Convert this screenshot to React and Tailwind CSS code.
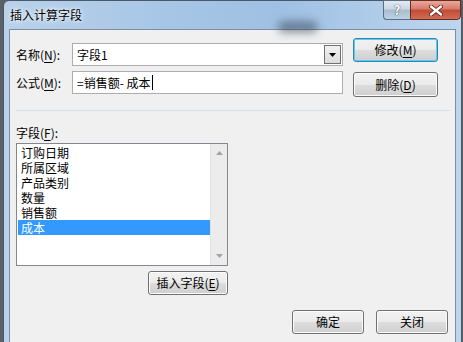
import React from 'react'

const FIELDS = ['订购日期', '所属区域', '产品类别', '数量', '销售额', '成本']

function Btn({ children, primary, className = '' }) {
  return (
    <div
      className={`flex items-center justify-center rounded-[3px] border text-[12px] text-black ${
        primary
          ? 'border-[#3c7fb1] shadow-[inset_0_0_0_1px_#48d6f8]'
          : 'border-[#707070] shadow-[inset_0_0_0_1px_#fcfcfc]'
      } bg-[linear-gradient(#f2f2f2_0%,#ebebeb_50%,#dddddd_51%,#cfcfcf_100%)] ${className}`}
    >
      {children}
    </div>
  )
}

function U({ children }) {
  return <span className="underline underline-offset-2">{children}</span>
}

export default function App() {
  return (
    <div
      className="w-[463px] h-[342px] overflow-hidden bg-[#5b5f66] flex"
      style={{ fontFamily: '"Microsoft YaHei", "Noto Sans CJK SC", sans-serif' }}
    >
      <div className="ml-[3px] w-[459px] h-[360px] border border-[#4a586a] rounded-t-[6px] bg-[linear-gradient(90deg,#b9d1ea_0%,#a7c6e6_35%,#9fc0e3_60%,#bdd6ee_100%)] flex flex-col">
        {/* title bar */}
        <div className="h-[28px] flex items-start relative">
          <div className="pl-[6px] pt-[6px] text-[12px] leading-[16px] text-black [text-shadow:0_0_6px_#ffffff,0_0_3px_#ffffff]">
            插入计算字段
          </div>
          <div className="absolute left-[274px] top-[20px] w-[40px] h-[12px] rounded-full bg-[#2e3a48] opacity-50 blur-[4px]" />
          <div className="ml-auto flex h-[20px] -mt-[1px]">
            <div className="w-[27px] h-[20px] rounded-bl-[4px] border border-[#5a6d82] border-r-0 bg-[linear-gradient(#e3ebf3_0%,#c9d6e3_45%,#a9bccf_50%,#bfd2e4_100%)] flex items-center justify-center text-[13px] font-bold text-white [text-shadow:0_0_1px_#3a4a5a,0_0_1px_#3a4a5a]">
              ?
            </div>
            <div className="w-[51px] h-[20px] rounded-br-[4px] border border-[#6a2a22] bg-[linear-gradient(#e9a99c_0%,#d77a6a_45%,#c24a35_50%,#d06d55_100%)] flex items-center justify-center">
              <svg width="14" height="11" viewBox="0 0 14 11">
                <path d="M2 1.5 L12 9.5 M12 1.5 L2 9.5" stroke="#5a2018" strokeWidth="4" strokeLinecap="round" />
                <path d="M2 1.5 L12 9.5 M12 1.5 L2 9.5" stroke="#ffffff" strokeWidth="2.4" strokeLinecap="round" />
              </svg>
            </div>
          </div>
        </div>

        {/* client area */}
        <div className="mx-[5px] flex-1 border border-[#7d8ea2] bg-[#f0f0f0] text-[12px] text-black">
          <div className="flex pl-[6px]">
            <div className="pt-[13px] flex flex-col gap-[5px]">
              <div className="flex items-center h-[23px]">
                <div className="w-[56px]">名称(<U>N</U>):</div>
                <div className="w-[271px] h-[23px] border border-[#abadb3] bg-white flex items-center">
                  <div className="flex-1 pl-[4px]">字段1</div>
                  <div className="w-[17px] h-[19px] mr-[1px] border border-[#707070] bg-[linear-gradient(#f2f2f2,#dcdcdc)] flex items-center justify-center">
                    <svg width="7" height="4" viewBox="0 0 7 4"><path d="M0 0h7L3.5 4z" fill="#000" /></svg>
                  </div>
                </div>
              </div>
              <div className="flex items-center h-[23px]">
                <div className="w-[56px]">公式(<U>M</U>):</div>
                <div className="w-[271px] h-[23px] border border-[#abadb3] bg-white flex items-center pl-[4px]">
                  <span>=销售额- 成本</span>
                  <span className="w-px h-[15px] bg-black ml-[1px]" />
                </div>
              </div>
            </div>
            <div className="pt-[8px] ml-[10px] flex flex-col gap-[10px]">
              <Btn primary className="w-[85px] h-[24px]">修改(<U>M</U>)</Btn>
              <Btn className="w-[85px] h-[25px]">删除(<U>D</U>)</Btn>
            </div>
          </div>

          <div className="ml-[6px] mr-[5px] mt-[13px] h-px bg-[#d5dfe5]" />

          <div className="pl-[6px] pt-[14px] leading-[16px]">字段(<U>F</U>):</div>

          <div className="ml-[6px] mt-[2px] w-[212px] h-[123px] border border-[#828790] bg-white flex">
            <div className="flex-1 pt-[1px] pl-[1px]">
              {FIELDS.map((f, i) => (
                <div
                  key={f}
                  className={`h-[15px] leading-[15px] overflow-hidden pl-[3px] ${
                    i === FIELDS.length - 1 ? 'bg-[#3399ff] text-white' : ''
                  }`}
                >
                  {f}
                </div>
              ))}
            </div>
            <div className="w-[17px] bg-[#ececec] border-l border-[#e2e2e2] flex flex-col justify-between items-center py-[7px]">
              <svg width="7" height="4" viewBox="0 0 7 4"><path d="M3.5 0L7 4H0z" fill="#a3a3a3" /></svg>
              <svg width="7" height="4" viewBox="0 0 7 4"><path d="M0 0h7L3.5 4z" fill="#a3a3a3" /></svg>
            </div>
          </div>

          <div className="w-[218px] flex justify-end mt-[5px]">
            <Btn className="w-[80px] h-[24px]">插入字段(<U>E</U>)</Btn>
          </div>

          <div className="flex justify-end gap-[12px] mr-[7px] mt-[15px]">
            <Btn className="w-[72px] h-[24px]">确定</Btn>
            <Btn className="w-[72px] h-[24px]">关闭</Btn>
          </div>
        </div>
      </div>
    </div>
  )
}
